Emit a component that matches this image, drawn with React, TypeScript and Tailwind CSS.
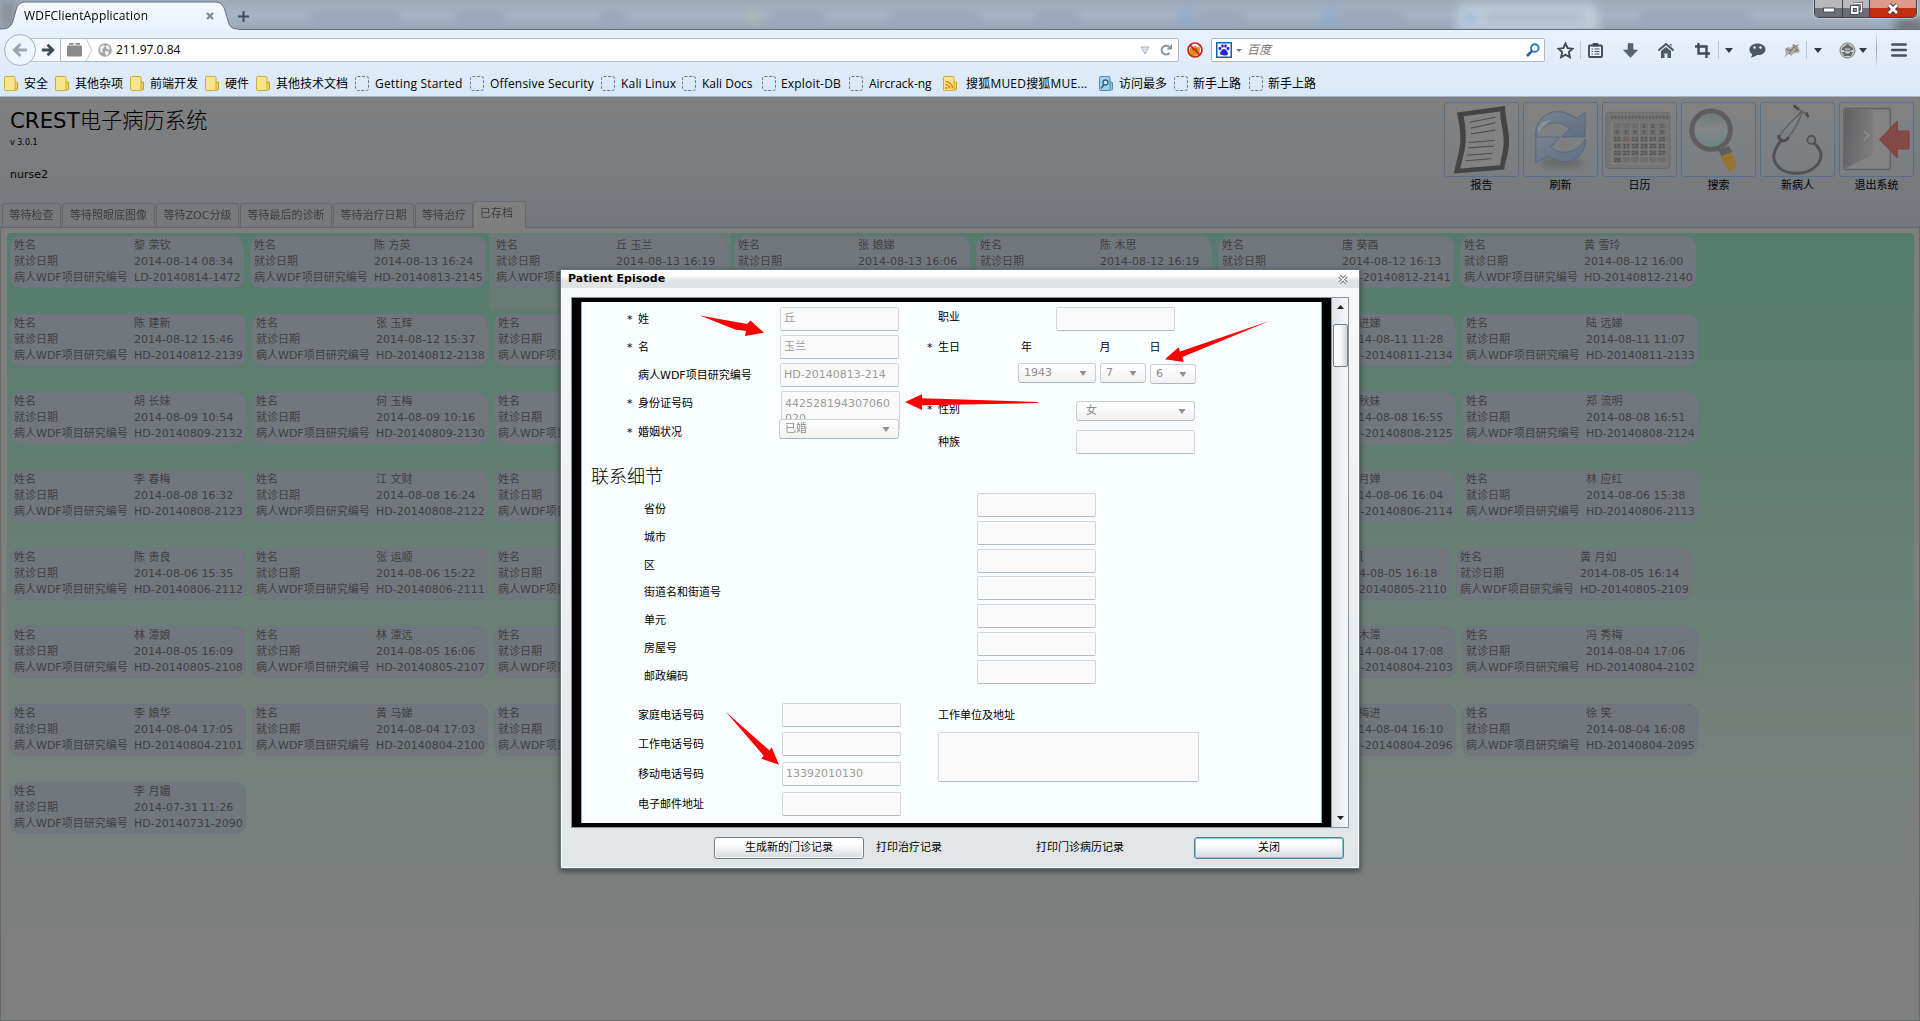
import React from "react";

const UI = "font-['Open_Sans','Noto_Sans_CJK_SC',sans-serif]";
const APP = "font-['DejaVu_Sans','Noto_Sans_CJK_SC',sans-serif]";

/* ---------- browser chrome ---------- */

function WindowButtons() {
  return (
    <div className="flex h-[18px] w-[103px] overflow-hidden rounded-b-[5px] border border-t-0 border-[#3c3f47] shadow-[0_0_0_1px_rgba(255,255,255,0.35)]">
      <div className="flex w-[28px] items-center justify-center border-r border-[#3c3f47] bg-gradient-to-b from-[#b9b9bb] from-50% to-[#6c6e73] to-50%">
        <svg width="14" height="8" viewBox="0 0 14 8"><rect x="1.5" y="3" width="11" height="4" fill="#fff" stroke="#4b4e5e" /></svg>
      </div>
      <div className="flex w-[27px] items-center justify-center border-r border-[#3c3f47] bg-gradient-to-b from-[#b9b9bb] from-50% to-[#6c6e73] to-50%">
        <svg width="14" height="14" viewBox="0 0 14 14">
          <path d="M4.5 1.5h8v8h-2" fill="none" stroke="#4b4e5e" strokeWidth="3" />
          <path d="M4.5 1.5h8v8h-2" fill="none" stroke="#fff" strokeWidth="1.4" />
          <rect x="1.5" y="3.5" width="8.5" height="9" fill="#fff" stroke="#4b4e5e" />
          <rect x="4.3" y="6.5" width="3" height="3" fill="#999" stroke="#4b4e5e" />
        </svg>
      </div>
      <div className="flex flex-1 items-center justify-center bg-gradient-to-b from-[#dc9a8c] from-45% to-[#c32d10] to-50%">
        <svg width="14" height="12" viewBox="0 0 14 12">
          <path d="M3 2l8 8M11 2l-8 8" stroke="#4b3a48" strokeWidth="4.6" />
          <path d="M3 2l8 8M11 2l-8 8" stroke="#fff" strokeWidth="2.8" />
        </svg>
      </div>
    </div>
  );
}

function TitleBar() {
  return (
    <div className="relative flex h-[30px] items-start bg-gradient-to-b from-[#9daaba] via-[#a6b4c5] to-[#98a6b6]">
      <svg className="absolute inset-0" width="1920" height="30" viewBox="0 0 1920 30">
        <defs>
          <filter id="soft" x="-20%" y="-60%" width="140%" height="220%"><feGaussianBlur stdDeviation="5" /></filter>
          <linearGradient id="tab" x1="0" y1="0" x2="0" y2="1"><stop offset="0" stopColor="#f5f8fc" /><stop offset="1" stopColor="#e9f2fc" /></linearGradient>
        </defs>
        <rect x="0" y="0" width="16" height="28" fill="#8d8f96" filter="url(#soft)" />
        <g filter="url(#soft)" fill="#8798ab" opacity="0.5">
          <rect x="310" y="12" width="90" height="10" /><rect x="455" y="12" width="50" height="10" />
          <rect x="600" y="12" width="26" height="10" /><rect x="770" y="12" width="55" height="10" />
          <rect x="890" y="12" width="90" height="10" /><rect x="1035" y="12" width="44" height="10" />
          <rect x="1200" y="12" width="44" height="10" /><rect x="1340" y="12" width="64" height="10" />
          <rect x="1640" y="12" width="110" height="10" />
        </g>
        <g filter="url(#soft)">
          <g opacity="0.55">
            <rect x="1180" y="10" width="14" height="14" fill="#7ba2d6" /><rect x="1322" y="10" width="14" height="14" fill="#7ba2d6" />
            <rect x="748" y="10" width="10" height="14" fill="#bcbf9c" />
          </g>
          <path d="M1454 32L1460 4H1595L1601 32Z" fill="#c5d3e1" opacity="0.8" />
          <rect x="1464" y="12" width="13" height="12" fill="#8fb7d6" opacity="0.7" />
          <rect x="1484" y="12" width="100" height="10" fill="#9fb0c2" opacity="0.6" />
          <rect x="1895" y="20" width="30" height="12" fill="#6b6d72" />
        </g>
        <path d="M0 29.5H1920" stroke="#5b7084" />
        <path d="M0 30V29C12 29 12 24 15 14C17 6 18 2 26 2H214C222 2 224 6 226 14C229 24 229 29 238 29V30Z" fill="url(#tab)" />
        <path d="M0 29C12 29 12 24 15 14C17 6 18 2 26 2H214C222 2 224 6 226 14C229 24 229 29 238 29" fill="none" stroke="#5f6f82" />
      </svg>
      <div className="relative ml-[24px] flex h-[31px] w-[210px] items-center">
        <span className="w-[182px] text-[12px] tracking-[0.015em] text-black">WDFClientApplication</span>
        <svg width="8" height="8" viewBox="0 0 8 8"><path d="M1 1l6 6M7 1l-6 6" stroke="#7c8896" strokeWidth="2.2" /></svg>
      </div>
      <svg className="relative mt-[11px] ml-[4px]" width="11" height="11" viewBox="0 0 11 11"><path d="M5.5 0v11M0 5.5h11" stroke="#3f4c59" strokeWidth="2" /></svg>
      <div className="relative mr-[3px] ml-auto"><WindowButtons /></div>
    </div>
  );
}

function Caret({ color = "#2f3a41" }: { color?: string }) {
  return <svg width="8" height="5" viewBox="0 0 8 5"><path d="M0 0h8L4 5z" fill={color} /></svg>;
}

function Slot({ w, children }: { w: string; children?: React.ReactNode }) {
  return <div className={`${w} flex h-full shrink-0 items-center justify-center`}>{children}</div>;
}

function NavBar() {
  return (
    <div className="flex h-[41px] items-center pb-px">
      <div className="z-10 ml-[4px] flex h-[32px] w-[32px] items-center justify-center rounded-full border border-[#9fb1c6] bg-[#eef5fd]">
        <svg width="16" height="16" viewBox="0 0 16 16"><path d="M15 8H3M8.500 2L2.500 8L8.500 14" fill="none" stroke="#9ba5b0" strokeWidth="3" /></svg>
      </div>
      <div className="-ml-[6px] flex h-[24px] w-[30px] items-center border-y border-[#b7c5d6] bg-[#f3f8fe] pl-[11px]">
        <svg width="14" height="14" viewBox="0 0 16 16"><path d="M1 8H13M7.500 2L13.500 8L7.500 14" fill="none" stroke="#3e4b56" strokeWidth="3.200" /></svg>
      </div>
      <div className="flex h-[24px] w-[1119px] items-center rounded-r-[2px] border border-[#a9b9cb] bg-white">
        <svg className="ml-[6px]" width="15" height="14" viewBox="0 0 15 14">
          <rect x="0" y="2.500" width="15" height="11" rx="1" fill="#8b8b8b" /><rect x="2" y="0" width="4.500" height="1.800" fill="#8b8b8b" /><rect x="8.500" y="0" width="4.500" height="1.800" fill="#8b8b8b" />
        </svg>
        <svg className="ml-[3px]" width="8" height="22" viewBox="0 0 8 22"><path d="M1 0L7 11L1 22" fill="none" stroke="#c2c6ca" /></svg>
        <svg className="ml-[5px]" width="14" height="14" viewBox="0 0 14 14">
          <circle cx="7" cy="7" r="6.800" fill="#a5a5a5" />
          <path d="M2 4l3-2 2 1-1 2-2 1 1 3-2 1-1-3zM8 2l3 1 1 3-2 1-2-2zM7 8l3 0 1 2-2 3-2-2z" fill="#ececec" />
        </svg>
        <span className="ml-[4px] text-[12px] text-black">211.97.0.84</span>
        <svg className="ml-auto" width="10" height="9" viewBox="0 0 10 9"><path d="M1 1h8L5 8z" fill="#dde3ec" stroke="#a9b2bf" /></svg>
        <svg className="mr-[6px] ml-[10px]" width="12" height="12" viewBox="0 0 12 12"><path d="M9.500 8.800A4.400 4.400 0 1 1 9 2.800" fill="none" stroke="#8593a2" strokeWidth="2" /><path d="M6.500 5.400H12V0z" fill="#8593a2" /></svg>
      </div>
      <Slot w="w-[32px]">
        <svg width="16" height="16" viewBox="0 0 16 16">
          <path d="M4 5l2 1 1-2 2 0 1 2 2-2 1 3-1 5-4 2-4-1-2-4z" fill="#e8890b" /><path d="M5 6l2 3M9 6l1 4" stroke="#8c4a05" />
          <circle cx="8" cy="8" r="7" fill="none" stroke="#c3261d" strokeWidth="1.700" /><path d="M3 3l10 10" stroke="#c3261d" strokeWidth="1.700" />
        </svg>
      </Slot>
      <div className="flex h-[24px] w-[334px] items-center rounded-[2px] border border-[#a9b9cb] bg-white pl-[4px]">
        <svg width="16" height="16" viewBox="0 0 16 16">
          <rect x="0.750" y="0.750" width="14.500" height="14.500" fill="#fff" stroke="#0b63b5" strokeWidth="1.500" />
          <g fill="#2424dd"><ellipse cx="4" cy="6.500" rx="1.400" ry="1.800" /><ellipse cx="6.500" cy="4" rx="1.300" ry="1.700" /><ellipse cx="9.500" cy="4" rx="1.300" ry="1.700" /><ellipse cx="12" cy="6.500" rx="1.400" ry="1.800" /><path d="M8 7c2 0 4 3 4 4.500S10 14 8 13.400S4 13 4 11.500S6 7 8 7z" /></g>
        </svg>
        <span className="ml-[4px]"><svg width="6" height="3" viewBox="0 0 6 3"><path d="M0 0h6L3 3z" fill="#777" /></svg></span>
        <span className="ml-[5px] text-[12px] text-[#7a7a7a] italic">百度</span>
        <svg className="mr-[4px] ml-auto" width="14" height="14" viewBox="0 0 14 14"><circle cx="8.800" cy="5" r="3.800" fill="none" stroke="#2c78b4" strokeWidth="1.900" /><path d="M6 8L1 13" stroke="#2562a0" strokeWidth="2.600" /></svg>
      </div>
      <Slot w="w-[40px]">
        <svg width="17" height="17" viewBox="0 0 17 17"><path d="M8.500 1.500l2.100 4.700 5 .5-3.800 3.400 1.100 5.100-4.400-2.600-4.400 2.600 1.100-5.100L1.400 6.700l5-.5z" fill="#f4f8fd" stroke="#3f4c57" strokeWidth="1.900" /></svg>
      </Slot>
      <div className="mr-[4px] -ml-[5px] h-[18px] w-px bg-[#b9c7d6]" />
      <Slot w="w-[21px]">
        <svg width="15" height="15" viewBox="0 0 15 15"><rect x="1" y="2.500" width="13" height="11.500" rx="1" fill="#eef4fb" stroke="#3f4c57" strokeWidth="1.900" /><rect x="4.500" y="0" width="6" height="3.500" rx="1" fill="#3f4c57" /><path d="M3.500 6h1.500M6.500 6h5M3.500 8.500h1.500M6.500 8.500h5M3.500 11h1.500M6.500 11h5" stroke="#3f4c57" strokeWidth="1.100" /></svg>
      </Slot>
      <Slot w="w-[48px]">
        <svg width="15" height="15" viewBox="0 0 15 15"><path d="M5 0.500h5v6.500h4.500L7.500 14.500L0.500 7H5z" fill="#566570" stroke="#3f4c57" strokeWidth="0.500" /></svg>
      </Slot>
      <Slot w="w-[24px]">
        <svg width="16" height="15" viewBox="0 0 16 15"><path d="M0.500 7.500L8 1l7.500 6.500" fill="none" stroke="#4b5963" strokeWidth="2" /><path d="M3 8l5-4 5 4v7H9.500v-4.500h-3V15H3z" fill="#4b5963" /><path d="M11.500 1h2v3z" fill="#4b5963" /></svg>
      </Slot>
      <Slot w="w-[48px]">
        <svg width="15" height="15" viewBox="0 0 15 15"><path d="M3.500 0v10.500H15M0 3.500h11.500V15" fill="none" stroke="#3f4c57" strokeWidth="2.400" /></svg>
      </Slot>
      <div className="-ml-[8px] h-[18px] w-px bg-[#b9c7d6]" />
      <Slot w="w-[20px]"><Caret /></Slot>
      <Slot w="w-[36px]">
        <svg width="17" height="15" viewBox="0 0 17 15"><path d="M8.500 0.500C13 0.500 16.500 3 16.500 6.500S13 12 9 12C7 12 6 14 1.500 14.500C3 13.300 3.300 12 3 11C1.300 10 0.500 8.500 0.500 6.500C0.500 3 4 0.500 8.500 0.500z" fill="#4b5963" /><circle cx="5.500" cy="4.500" r="1.200" fill="#fff" /><circle cx="11.500" cy="4.500" r="1.200" fill="#fff" /></svg>
      </Slot>
      <Slot w="w-[34px]">
        <svg width="16" height="14" viewBox="0 0 16 14"><path d="M1 6l3-2 3 1 2-4 3 1 3-1-1 3 2 4-2 2-4 0-3 3-2-2-3 1z" fill="#aeaba8" /><path d="M2 6l5 2 3-4 4 4M5 11l3-5M9 2l4 2M10 9l4-3" stroke="#6d6a68" fill="none" strokeWidth="0.900" /><path d="M1 13.500l2.500-2.500" stroke="#888" /></svg>
      </Slot>
      <div className="-ml-[3px] h-[18px] w-px bg-[#b9c7d6]" />
      <Slot w="w-[21px]"><Caret /></Slot>
      <Slot w="w-[38px]">
        <svg width="17" height="17" viewBox="0 0 17 17"><circle cx="8.500" cy="8.500" r="7.500" fill="#c9c9c9" stroke="#77787a" /><path d="M3 6l5.500-4L14 6v2H11V6.500H6V8H3zM3 10h3l1 1.500h3L11 10h3l-2 4H5z" fill="#66686a" /><rect x="5" y="7.800" width="7" height="1.400" fill="#77787a" /></svg>
      </Slot>
      <div className="-ml-[7px]"><Caret /></div>
      <div className="ml-[9px] h-[36px] w-px bg-gradient-to-b from-transparent via-[#8fa1b4] to-transparent" />
      <svg className="ml-[14px]" width="16" height="14" viewBox="0 0 16 14"><path d="M1.300 1.500h13.400M1.300 7h13.400M1.300 12.500h13.400" stroke="#42515c" strokeWidth="2.600" strokeLinecap="round" /></svg>
    </div>
  );
}

function FolderIcon() {
  return (
    <svg width="14" height="16" viewBox="0 0 14 16"><rect x="10" y="6" width="3.500" height="8" rx="1" fill="#f0d565" stroke="#c79a22" /><rect x="0.500" y="0.500" width="10.500" height="14" rx="1" fill="#f7e58d" stroke="#d0aa3a" /></svg>
  );
}
function BlankIcon() {
  return <svg width="14" height="15" viewBox="0 0 14 15"><rect x="0.500" y="0.500" width="13" height="14" rx="2" fill="none" stroke="#6f7982" strokeDasharray="3 1.500" /></svg>;
}
function FeedIcon() {
  return (
    <svg width="14" height="16" viewBox="0 0 14 16"><rect x="10" y="6" width="3.500" height="8" rx="1" fill="#f0d565" stroke="#c79a22" /><rect x="0.500" y="0.500" width="10.500" height="14" rx="1" fill="#f7e58d" stroke="#d0aa3a" /><path d="M2.500 5.500a7 7 0 0 1 7 7M2.500 8.500a4 4 0 0 1 4 4" fill="none" stroke="#e08a12" strokeWidth="1.600" /><circle cx="3.300" cy="12" r="1.200" fill="#e08a12" /></svg>
  );
}
function SmartIcon() {
  return (
    <svg width="14" height="16" viewBox="0 0 14 16"><rect x="10" y="6" width="3.500" height="8" rx="1" fill="#8fc3e2" stroke="#4b8db6" /><rect x="0.500" y="0.500" width="10.500" height="14" rx="1" fill="#a5d0ea" stroke="#4b8db6" /><circle cx="6.500" cy="6.500" r="2.500" fill="#cfe8f6" stroke="#2a5f86" strokeWidth="1.300" /><path d="M5 8.500L2 12.500" stroke="#2a5f86" strokeWidth="1.600" /></svg>
  );
}

const bookmarks: [string, string, string, string][] = [
  ["folder", "安全", "w-[51px]", "ml-[6px]"],
  ["folder", "其他杂项", "w-[75px]", "ml-[6px]"],
  ["folder", "前端开发", "w-[75px]", "ml-[6px]"],
  ["folder", "硬件", "w-[51px]", "ml-[6px]"],
  ["folder", "其他技术文档", "w-[99px]", "ml-[6px]"],
  ["blank", "Getting Started", "w-[115px]", "ml-[6px] tracking-[0.015em]"],
  ["blank", "Offensive Security", "w-[131px]", "ml-[6px] tracking-[0.015em]"],
  ["blank", "Kali Linux", "w-[81px]", "ml-[6px] tracking-[0.015em]"],
  ["blank", "Kali Docs", "w-[80px]", "ml-[6px]"],
  ["blank", "Exploit-DB", "w-[87px]", "ml-[5px] tracking-[0.015em]"],
  ["blank", "Aircrack-ng", "w-[94px]", "ml-[6px]"],
  ["feed", "搜狐MUED搜狐MUE...", "w-[156px]", "ml-[9px] tracking-[0.017em]"],
  ["smart", "访问最多", "w-[75px]", "ml-[6px]"],
  ["blank", "新手上路", "w-[75px]", "ml-[5px]"],
  ["blank", "新手上路", "w-[75px]", "ml-[5px]"],
];

function BookmarkBar() {
  return (
    <div className="flex h-[26px] items-center border-b border-[#a3b6cb] pl-[4px]">
      {bookmarks.map(([icon, label, w, gap], i) => (
        <div key={i} className={`${w} flex shrink-0 items-center`}>
          {icon === "folder" ? <FolderIcon /> : icon === "feed" ? <FeedIcon /> : icon === "smart" ? <SmartIcon /> : <BlankIcon />}
          <span className={`${gap} text-[12px] leading-[16px] whitespace-nowrap text-black`}>{label}</span>
        </div>
      ))}
    </div>
  );
}

/* ---------- application header ---------- */

function ReportIcon() {
  return (
    <svg width="74" height="74" viewBox="0 0 74 74">
      <path d="M12 9L61 2.500C61 16 65 26 65 38C65 50 61 58 60 67L9 71C12 56 15 48 15.500 38C16 28 14 18 12 9Z" fill="#444" />
      <path d="M19 13L56 8C56 20 59.500 28 59.500 38C59.500 48 56.500 56 56 62.500L15.500 66C18 54 20.500 48 21 38C21.500 28 20 20 19 13Z" fill="#828282" />
      <path d="M25 19L51 14M26 25L51 19.500M26 31L51 27M24 39.500L50 37.500M23.500 45L50 43M22 52.500L48 50.500M20.500 58L47 56" stroke="#4b4b4b" strokeWidth="1.100" />
    </svg>
  );
}
function RefreshIcon() {
  return (
    <svg width="74" height="74" viewBox="0 0 74 74">
      <defs>
        <linearGradient id="blue" x1="0" y1="0" x2="1" y2="1"><stop offset="0" stopColor="#77818e" /><stop offset="1" stopColor="#607087" /></linearGradient>
        <filter id="shade" x="-30%" y="-60%" width="160%" height="220%"><feGaussianBlur stdDeviation="3" /></filter>
      </defs>
      <ellipse cx="38" cy="60" rx="22" ry="6" fill="#68696b" filter="url(#shade)" />
      <path d="M12 33C10 14 30 -1 53 15L62 9V34H38L46 26C38 17 22 16 12 33Z" fill="url(#blue)" stroke="#56697f" />
      <path d="M62 36C64 54 44 67 24 53L12 60V34H36L27 44C36 53 54 51 62 36Z" fill="url(#blue)" stroke="#56697f" />
      <path d="M14 26C17 16 26 17 27 17C22 21 18 25 14 31Z" fill="#8b9096" />
    </svg>
  );
}
function CalendarIcon() {
  const cells = Array.from({ length: 36 }, (_, i) => i);
  return (
    <svg width="74" height="74" viewBox="0 0 74 74">
      <rect x="3" y="9" width="65" height="57" rx="3" fill="#757576" stroke="#6c6c6d" />
      <path d="M8 14H66" stroke="#5e5e5f" strokeWidth="3" strokeDasharray="2 1.500" />
      <rect x="8" y="19" width="56" height="43" fill="#7d7d7d" />
      {cells.map((i) => {
        const n = i - 2;
        const show = n > 0 && n < 29;
        const x = 10.5 + (i % 6) * 9;
        const y = 19.5 + Math.floor(i / 6) * 6.9;
        return (
          <g key={i}>
            <rect x={x} y={y} width="8" height="5.900" fill="#6e6e6f" />
            {show && <text x={x + 4} y={y + 4.9} textAnchor="middle" fontSize="5.500" fontFamily="DejaVu Sans" fill={n === 11 ? "#94413f" : "#424242"}>{n}</text>}
          </g>
        );
      })}
    </svg>
  );
}
function SearchIcon() {
  return (
    <svg width="74" height="74" viewBox="0 0 74 74">
      <defs><linearGradient id="lens" x1="0" y1="0" x2="0" y2="1"><stop offset="0" stopColor="#71797b" /><stop offset="0.500" stopColor="#828687" /><stop offset="1" stopColor="#6b8487" /></linearGradient></defs>
      <circle cx="29.500" cy="27" r="19.500" fill="url(#lens)" stroke="#5f5d5d" strokeWidth="5" />
      <path d="M37 48L47 43L51 49L41 55Z" fill="#5c5c5e" />
      <path d="M39 54L50 49L56 64L47 69Z" fill="#957430" />
    </svg>
  );
}
function StethoscopeIcon() {
  return (
    <svg width="74" height="74" viewBox="0 0 74 74" fill="none">
      <path d="M35 3L41 8C36 14 26 22 20 31C18 35 22 38 25 37C32 30 38 20 42 8L48 13" stroke="#626264" strokeWidth="1.600" />
      <path d="M18 32C17 39 25 40 28 34" stroke="#4a4a4c" strokeWidth="2.600" />
      <path d="M20 38C14 46 10 54 15 61C24 74 48 74 58 61C64 53 60 44 51 38" stroke="#515153" strokeWidth="3" />
      <circle cx="51" cy="37" r="4" fill="#7c7c7c" stroke="#555" strokeWidth="2" />
      <path d="M33 2l5 4M46 9l2 5" stroke="#4a4a4c" strokeWidth="2.500" />
    </svg>
  );
}
function ExitIcon() {
  return (
    <svg width="74" height="74" viewBox="0 0 74 74">
      <defs><linearGradient id="door" x1="0" y1="0" x2="1" y2="0.300"><stop offset="0" stopColor="#616163" /><stop offset="1" stopColor="#7b7b7c" /></linearGradient></defs>
      <rect x="4" y="5" width="47" height="62" rx="2" fill="#838383" stroke="#616162" strokeWidth="1.500" />
      <path d="M5 6H33V52L5 66Z" fill="url(#door)" />
      <path d="M24 28l5 4-5 6" stroke="#8b8b8b" strokeWidth="1.500" fill="none" />
      <path d="M40 36.500L58 18V28H70V46H58V55Z" fill="#854948" stroke="#7b3b3b" />
    </svg>
  );
}

const tools: [string, () => React.ReactElement][] = [
  ["报告", ReportIcon], ["刷新", RefreshIcon], ["日历", CalendarIcon],
  ["搜索", SearchIcon], ["新病人", StethoscopeIcon], ["退出系统", ExitIcon],
];

function AppHeader() {
  return (
    <div className="flex h-[104px] justify-between">
      <div className="pl-[10px] text-black">
        <div className="mt-[10px] h-[28px] text-[21.300px] leading-[28px]">CREST<span className="font-light">电子病历系统</span></div>
        <div className="mt-[2px] text-[8px] leading-[12px]">v 3.0.1</div>
        <div className="mt-[18px] text-[11px] leading-[16px]">nurse2</div>
      </div>
      <div className="mr-[6px] flex gap-[4px] pt-[5px]">
        {tools.map(([label, Icon]) => (
          <div key={label} className="w-[75px]">
            <div className="flex h-[75px] w-[75px] items-center justify-center rounded-[3px] border border-[#53708c] bg-white/[0.02]"><Icon /></div>
            <div className="mt-px text-center text-[11px] leading-[16px] text-black">{label}</div>
          </div>
        ))}
      </div>
    </div>
  );
}

const tabs: [string, string][] = [
  ["等待检查", "w-[59px]"], ["等待照眼底图像", "w-[93px]"], ["等待ZOC分级", "w-[83px]"],
  ["等待最后的诊断", "w-[92px]"], ["等待治疗日期", "w-[81px]"], ["等待治疗", "w-[58px]"],
];

function TabStrip() {
  return (
    <div className="z-10 -mb-px flex h-[27px] items-end pl-[2px]">
      {tabs.map(([label, w], i) => (
        <div key={i} className={`${w} box-border flex h-[25px] shrink-0 items-center justify-center rounded-t-[3px] border border-[#63666a] bg-[#77797c] pt-[2px] text-[11px] whitespace-nowrap text-[#3b3c3d] not-first:ml-px`}>{label}</div>
      ))}
      <div className="flex h-[27px] w-[53px] items-center justify-center rounded-t-[3px] border border-b-0 border-[#686b6f] bg-[#7f7f7f] pr-[6px] pb-[2px] text-[11px] text-[#3b3c3d]">已存档</div>
    </div>
  );
}

/* ---------- patient cards ---------- */

type Patient = { name?: string; date?: string; id?: string; w?: string; hl?: boolean };
const hidden: Patient = {};
const p = (name: string, date: string, id: string, w?: string, hl?: boolean): Patient => ({ name, date: "2014-" + date, id, w, hl });

const rows: Patient[][] = [
  [
    p("黎 荣钦", "08-14 08:34", "LD-20140814-1472", "w-[240px]"), p("陈 方英", "08-13 16:24", "HD-20140813-2145"),
    p("丘 玉兰", "08-13 16:19", "HD-20140813-2144", undefined, true), p("张 娘娣", "08-13 16:06", "HD-20140813-2143"),
    p("陈 木思", "08-12 16:19", "HD-20140812-2142"), p("唐 葵酉", "08-12 16:13", "HD-20140812-2141"), p("黄 雪玲", "08-12 16:00", "HD-20140812-2140"),
  ],
  [p("陈 建新", "08-12 15:46", "HD-20140812-2139"), p("张 玉辉", "08-12 15:37", "HD-20140812-2138"), hidden, hidden, hidden, p("陈 进娣", "08-11 11:28", "HD-20140811-2134"), p("陆 远娣", "08-11 11:07", "HD-20140811-2133")],
  [p("胡 长妹", "08-09 10:54", "HD-20140809-2132"), p("何 玉梅", "08-09 10:16", "HD-20140809-2130"), hidden, hidden, hidden, p("陈 秋妹", "08-08 16:55", "HD-20140808-2125"), p("郑 流明", "08-08 16:51", "HD-20140808-2124")],
  [p("李 春梅", "08-08 16:32", "HD-20140808-2123"), p("江 文财", "08-08 16:24", "HD-20140808-2122"), hidden, hidden, hidden, p("陈 月婵", "08-06 16:04", "HD-20140806-2114"), p("林 应红", "08-06 15:38", "HD-20140806-2113")],
  [p("陈 贵良", "08-06 15:35", "HD-20140806-2112"), p("张 运顺", "08-06 15:22", "HD-20140806-2111"), hidden, hidden, { w: "w-[236px]" }, p("陈 凤", "08-05 16:18", "HD-20140805-2110"), p("黄 月如", "08-05 16:14", "HD-20140805-2109")],
  [p("林 潭娘", "08-05 16:09", "HD-20140805-2108"), p("林 潭远", "08-05 16:06", "HD-20140805-2107"), hidden, hidden, hidden, p("陈 木潭", "08-04 17:08", "HD-20140804-2103"), p("冯 秀梅", "08-04 17:06", "HD-20140804-2102")],
  [p("李 娘华", "08-04 17:05", "HD-20140804-2101"), p("黄 马娣", "08-04 17:03", "HD-20140804-2100"), hidden, hidden, hidden, p("陈 梅进", "08-04 16:10", "HD-20140804-2096"), p("徐 笑", "08-04 16:08", "HD-20140804-2095")],
  [p("李 月媚", "07-31 11:26", "HD-20140731-2090")],
];

function PatientCard({ data }: { data: Patient }) {
  return (
    <div className={`${data.w ?? "w-[242px]"} h-[78px] shrink-0 p-[3px] ${data.hl ? "bg-[#697b75]" : ""}`}>
      <div className="flex h-[52px] w-full rounded-[10px] border border-[#6d7482] bg-[#71777d] pt-px pl-[3px] text-[11px] leading-[16px] whitespace-nowrap text-[#3f4041]">
        <div className="w-[120px] shrink-0">
          <div>姓名</div><div>就诊日期</div><div>病人WDF项目研究编号</div>
        </div>
        <div><div className="h-[16px]">{data.name}</div><div className="h-[16px]">{data.date}</div><div className="h-[16px]">{data.id}</div></div>
      </div>
    </div>
  );
}

function PatientBoard() {
  return (
    <div className="flex-1 border border-[#66696d] bg-[#7f7e7e] px-[6px] pt-[5px] pr-[5px]">
      <div className="h-full rounded-t-[4px] bg-gradient-to-b from-[#547d6d] via-[#697f76] via-45% to-[#7f807f] to-90%">
        {rows.map((row, i) => (
          <div key={i} className="flex h-[78px]">
            {row.map((c, j) => <PatientCard key={j} data={c} />)}
          </div>
        ))}
      </div>
    </div>
  );
}

/* ---------- dialog ---------- */

const BOX = "shrink-0 rounded-[2px] border border-[#d3d7dc] border-b-[#b4bac1] bg-[#fafafa] text-[11px] text-[#9b9b9b]";

function Field({ value, className = "w-[119px]" }: { value?: string; className?: string }) {
  return <div className={`${BOX} ${className} flex h-[24px] items-center overflow-hidden pl-[3px] whitespace-nowrap`}>{value}</div>;
}
function Select({ value, className, pad = "pl-[5px]" }: { value: string; className: string; pad?: string }) {
  return (
    <div className={`${className} ${pad} flex h-[20px] shrink-0 items-center justify-between rounded-[3px] border border-[#c9ced3] border-b-[#aeb5bb] bg-gradient-to-b from-white to-[#f1f1f1] pr-[8px] text-[11px] text-[#8d8d8d]`}>
      <span>{value}</span>
      <svg width="8" height="5" viewBox="0 0 8 5"><path d="M0.500 0h7L4 5z" fill="#8f8f8f" /></svg>
    </div>
  );
}
function Label({ star, text, className }: { star?: boolean; text: string; className: string }) {
  return (
    <div className={`${className} flex shrink-0 whitespace-nowrap`}>
      <span className="w-[11px]">{star ? "*" : ""}</span><span>{text}</span>
    </div>
  );
}

function Identity() {
  return (
    <div className="flex">
      <div className="w-[345px] shrink-0 pt-[3px] pl-[45px]">
        <div className="flex h-[28px] items-center"><Label star text="姓" className="w-[153px] pt-[2px]" /><Field value="丘" /></div>
        <div className="flex h-[28px] items-center"><Label star text="名" className="w-[153px] pt-[2px]" /><Field value="玉兰" /></div>
        <div className="flex h-[28px] items-center"><Label text="病人WDF项目研究编号" className="w-[153px] pt-[2px]" /><Field value="HD-20140813-214" /></div>
        <div className="flex h-[28px]">
          <Label star text="身份证号码" className="w-[154px] items-center pt-[2px]" />
          <div className={`${BOX} mt-[2px] h-[40px] w-[119px] overflow-hidden pt-[4px] pl-[3px] leading-[15px]`}>442528194307060<br />020</div>
        </div>
        <div className="flex h-[28px] items-center"><Label star text="婚姻状况" className="w-[152px] pt-[3px]" /><Select value="已婚" className="z-10 -mt-[4px] w-[120px]" /></div>
      </div>
      <div className="pt-px">
        <div className="flex h-[28px] items-center"><Label text="职业" className="w-[129px] pt-px" /><Field className="mt-[4px] w-[119px]" /></div>
        <div className="mt-[3px] flex h-[28px] items-center">
          <Label star text="生日" className="w-[94px]" /><span className="w-[78.500px]">年</span><span className="w-[50px]">月</span><span>日</span>
        </div>
        <div className="mt-px ml-[91px] flex gap-[4px]">
          <Select value="1943" className="w-[78px]" /><Select value="7" className="w-[46px]" /><Select value="6" className="mt-px w-[46px]" />
        </div>
        <div className="mt-[17px] flex h-[20px]"><Label star text="性别" className="h-[18px] w-[149px] items-center" /><Select value="女" pad="pl-[9px]" className="w-[119px]" /></div>
        <div className="mt-[9px] flex h-[24px] items-center"><Label text="种族" className="w-[149px] pt-[2px]" /><Field /></div>
      </div>
    </div>
  );
}

const address: [string, string][] = [
  ["省份", "h-[28px]"], ["城市", "h-[28px]"], ["区", "h-[27px]"], ["街道名和街道号", "h-[28px]"],
  ["单元", "h-[28px]"], ["房屋号", "h-[28px]"], ["邮政编码", "h-[28px]"],
];

function Form() {
  return (
    <div className="h-full overflow-hidden border-x border-[#8fa9d8] bg-[#f8feff] text-[11px] leading-[16px] text-black">
      <Identity />
      <div className="mt-[10px] ml-[9px] text-[18px] leading-[26px] font-light">联系细节</div>
      <div className="mt-[3px] pl-[62px]">
        {address.map(([label, h]) => (
          <div key={label} className={`${h} flex`}><span className="w-[333px] pt-[9px]">{label}</span><Field /></div>
        ))}
      </div>
      <div className="mt-[15px] flex pl-[45px]">
        <div>
          <div className="flex h-[29px]"><Label text="家庭电话号码" className="w-[155px] pt-[5px]" /><Field /></div>
          <div className="flex h-[30px]"><Label text="工作电话号码" className="w-[155px] pt-[5px]" /><Field /></div>
          <div className="flex h-[30px]"><Label text="移动电话号码" className="w-[155px] pt-[5px]" /><Field value="13392010130" /></div>
          <div className="flex h-[30px]"><Label text="电子邮件地址" className="w-[155px] pt-[5px]" /><Field /></div>
        </div>
        <div className="ml-[37px]">
          <div className="h-[29px] pt-[5px]">工作单位及地址</div>
          <div className={`${BOX} h-[50px] w-[261px]`} />
        </div>
      </div>
    </div>
  );
}

function Scrollbar() {
  return (
    <div className="flex w-[17px] flex-col items-center border-l border-[#8c979f] bg-gradient-to-r from-[#dfe4e9] to-[#f5f8fb]">
      <svg className="mt-[7px]" width="7" height="4" viewBox="0 0 7 4"><path d="M0 4h7L3.500 0z" fill="#222" /></svg>
      <div className="mt-[15px] h-[43px] w-[15px] rounded-[2px] border border-[#6f828d] bg-gradient-to-r from-white via-[#f7f8fa] to-[#cfd6dc]" />
      <svg className="mt-auto mb-[7px]" width="7" height="4" viewBox="0 0 7 4"><path d="M0 0h7L3.500 4z" fill="#222" /></svg>
    </div>
  );
}

function Dialog() {
  return (
    <div className="absolute top-[269px] left-[560px] flex h-[600px] w-[800px] flex-col rounded-[2px] border border-[#62757f] bg-gradient-to-b from-[#f8f9fa] to-[#e1e5e8] shadow-[0_2px_5px_1px_rgba(40,45,45,0.6),inset_0_0_0_1px_#fff]">
      <div className="flex h-[18px] items-center justify-between bg-gradient-to-b from-white from-30% to-[#dfe3e5] to-60% pt-px pr-[11px] pl-[7px]">
        <span className="text-[11px] font-bold text-black">Patient Episode</span>
        <svg width="10" height="9" viewBox="0 0 10 9"><path d="M1.500 1l7 7M8.500 1l-7 7" stroke="#76797b" strokeWidth="3.400" /><path d="M1.500 1l7 7M8.500 1l-7 7" stroke="#f5f6f7" strokeWidth="1.500" /></svg>
      </div>
      <div className="mx-[10px] mt-[9px] flex h-[531px] w-[778px] border border-[#87929a] bg-black">
        <div className="flex-1 py-[4px] pr-[9px] pl-[9px]"><Form /></div>
        <Scrollbar />
      </div>
      <div className="flex pt-[9px] pl-[153px] text-[11px] leading-[20px] text-black">
        <div className="h-[22px] w-[150px] rounded-[3px] border border-[#6d7e89] bg-gradient-to-b from-white from-30% to-[#d5dade] text-center shadow-[inset_0_0_0_1px_#fff]">生成新的门诊记录</div>
        <span className="mt-px ml-[12px] w-[160px]">打印治疗记录</span>
        <span className="mt-px w-[158px]">打印门诊病历记录</span>
        <div className="h-[22px] w-[150px] rounded-[3px] border border-[#5f7b8c] bg-gradient-to-b from-white from-30% to-[#d5dade] text-center shadow-[inset_0_0_0_1px_#7fc6da]">关闭</div>
      </div>
    </div>
  );
}

function Arrows() {
  return (
    <svg className="pointer-events-none absolute inset-0" width="1920" height="1021" viewBox="0 0 1920 1021" fill="#fe0000">
      <path d="M700 315.500L747 324L750.500 320.500L764 332.700L745 336L746 331L735 329.500Z" />
      <path d="M905 402L922 394.300V398.300L1038 402L1038 403L922 405.300V410Z" />
      <path d="M1270 320.800L1182.500 357L1183.600 362L1165 359.300L1178.600 347.300L1180 351.500Z" />
      <path d="M725.500 711.500L769.500 750.500L771.600 747.300L779 764.700L761.400 758.700L763.500 755.500Z" />
    </svg>
  );
}

export default function App() {
  return (
    <div className="relative flex h-[1021px] w-[1920px] flex-col overflow-hidden bg-white">
      <div className={`${UI} h-[97px] bg-gradient-to-b from-[#e9f1fb] from-30% to-[#d8e8f8]`}>
        <TitleBar /><NavBar /><BookmarkBar />
      </div>
      <div className={`${APP} flex flex-1 flex-col bg-[linear-gradient(#808080,#74787d_130px,#7a7a7b)]`}>
        <AppHeader /><TabStrip /><PatientBoard />
      </div>
      <div className={APP}><Dialog /></div>
      <Arrows />
    </div>
  );
}
